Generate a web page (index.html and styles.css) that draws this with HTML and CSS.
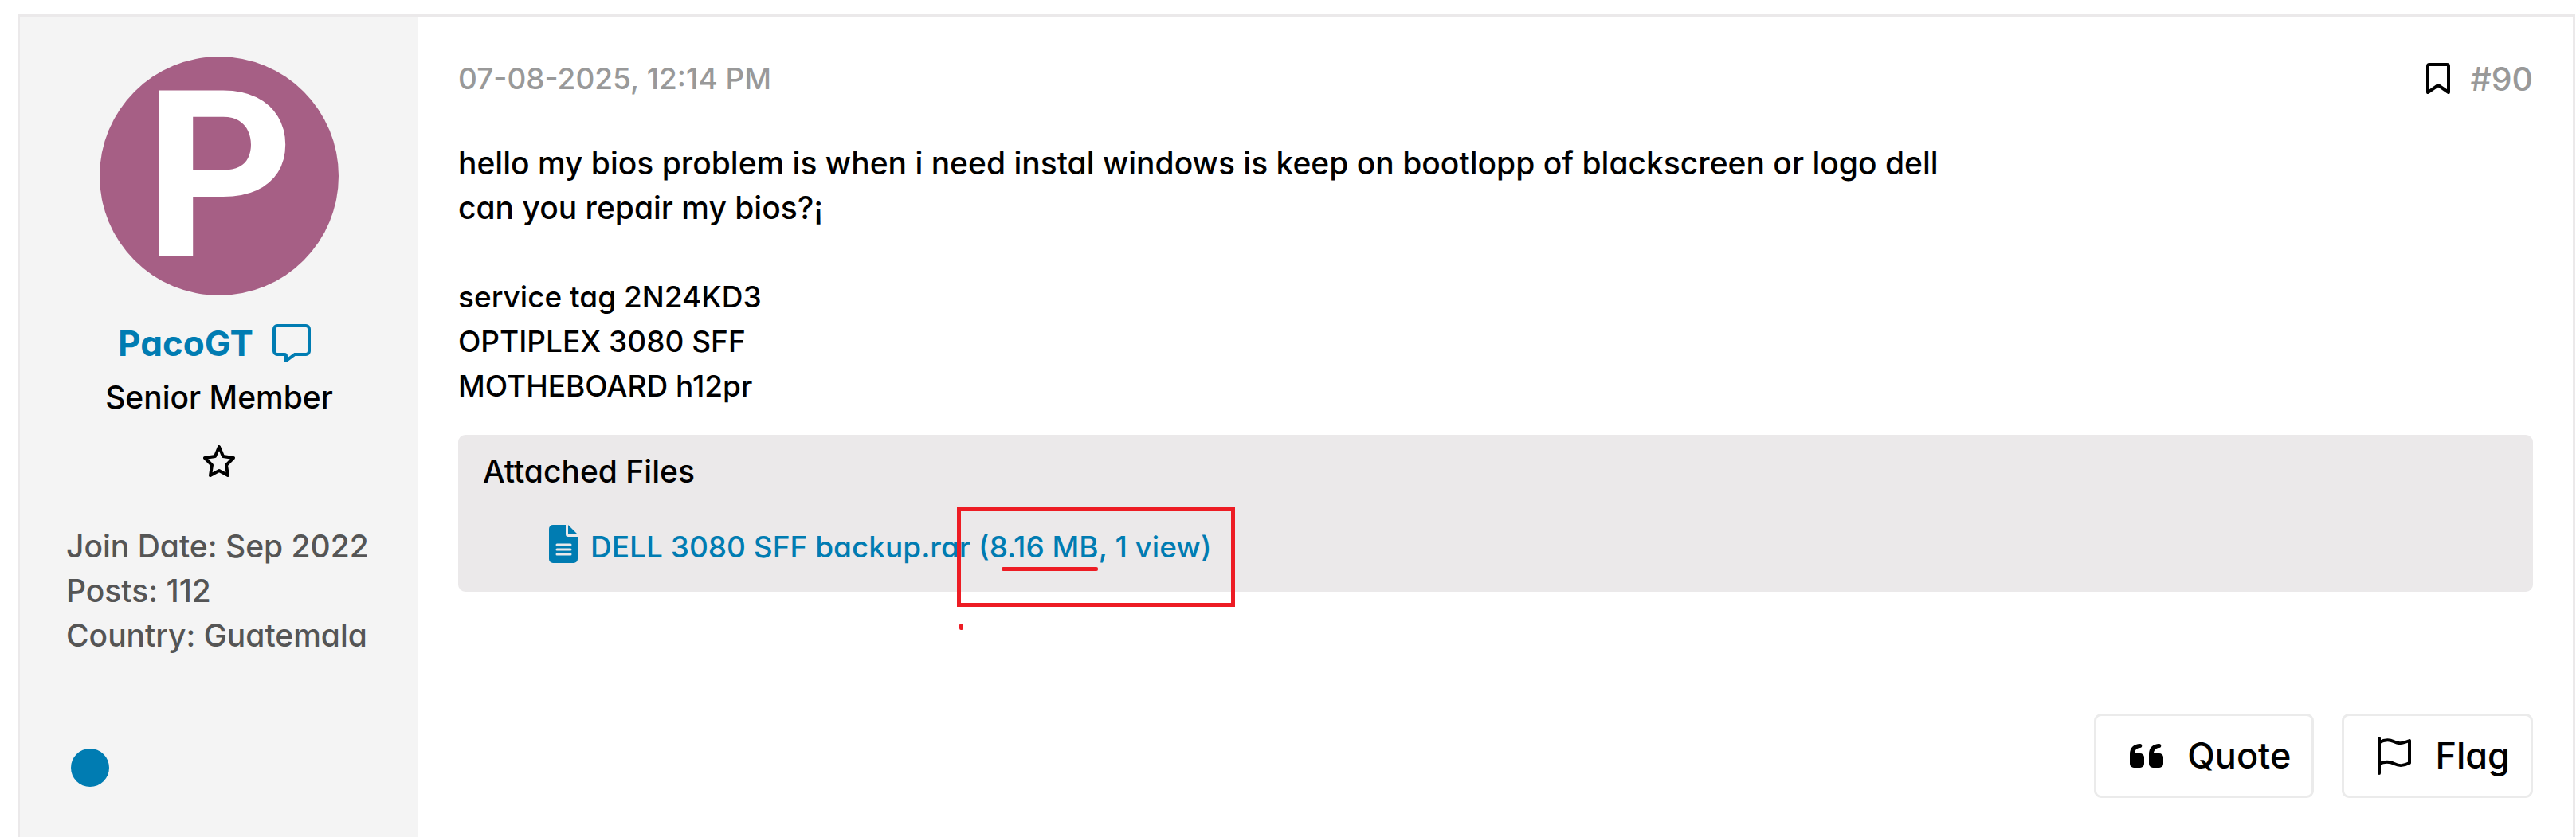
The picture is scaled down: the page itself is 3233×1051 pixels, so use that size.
FILE: index.html
```html
<!DOCTYPE html>
<html lang="en">
<head>
    <meta charset="utf-8">
    <title>Forum post #90</title>
    <link rel="stylesheet" href="styles.css">
</head>
<body>
    <article class="post">
        <aside class="user">
            <div class="avatar">P</div>
            <div class="user-name">
                <a href="#">PacoGT</a>
                <a href="#" aria-label="Send message">
                    <svg class="icon-chat" viewBox="0 0 48 48" fill="none" stroke="currentColor" stroke-width="4">
                        <path d="M6 2h36a4 4 0 0 1 4 4v28a4 4 0 0 1-4 4H28l-11 8v-6a2 2 0 0 0-2-2H6a4 4 0 0 1-4-4V6a4 4 0 0 1 4-4z"/>
                    </svg>
                </a>
            </div>
            <div class="user-title">Senior Member</div>
            <svg class="icon-star" viewBox="0 0 40 40" fill="none" stroke="currentColor" stroke-width="4" stroke-linejoin="round">
                <path d="M20 2l5 12 13 2-9 9 2 13-11-6-11 6 2-13-9-9 13-2z"/>
            </svg>
            <ul class="user-stats">
                <li>Join Date: Sep 2022</li>
                <li>Posts: 112</li>
                <li>Country: Guatemala</li>
            </ul>
            <span class="status"></span>
        </aside>

        <div class="content">
            <header class="post-header">
                <time>07-08-2025, 12:14 PM</time>
                <div class="post-links">
                    <a href="#" class="bookmark" aria-label="Bookmark">
                        <svg class="icon-bookmark" viewBox="0 0 30 40" fill="none" stroke="currentColor" stroke-width="4" stroke-linejoin="round">
                            <path d="M2 37V4a2 2 0 0 1 2-2h22a2 2 0 0 1 2 2v33l-13-9z"/>
                        </svg>
                    </a>
                    <a href="#" class="post-count">#90</a>
                </div>
            </header>

            <div class="post-text">
                <p>
                    hello my bios problem is when i need instal windows is keep on bootlopp of blackscreen or logo dell<br>
                    can you repair my bios?¡
                </p>
                <p class="specs">
                    service tag 2N24KD3<br>
                    OPTIPLEX 3080 SFF<br>
                    MOTHEBOARD h12pr
                </p>
            </div>

            <section class="attachments">
                <div class="attachments-title">Attached Files</div>
                <div class="file">
                    <svg class="icon-file" viewBox="0 0 36 48" fill="currentColor">
                        <path d="M5 0h16v12a3 3 0 0 0 3 3h12v28a5 5 0 0 1-5 5H5a5 5 0 0 1-5-5V5a5 5 0 0 1 5-5zM24 0l12 12H24z"/>
                        <path d="M10 25h17M10 31h17M10 37h17" stroke="#ebe9ea" stroke-width="3" stroke-linecap="round"/>
                    </svg>
                    <a href="#">DELL 3080 SFF backup.rar (8.16 MB, 1 view)</a>
                </div>
                <span class="mark mark-box"></span>
                <span class="mark mark-line"></span>
                <span class="mark mark-dot"></span>
            </section>

            <footer class="actions">
                <button type="button">
                    <svg class="icon-quote" viewBox="0 0 42 30" fill="currentColor">
                        <path id="q" d="M0 13C0 5 5 0 13 0c3 0 3 5 0 5-4 0-7 3-7 7h7a5 5 0 0 1 5 5v8a5 5 0 0 1-5 5H5a5 5 0 0 1-5-5z"/>
                        <use href="#q" x="24"/>
                    </svg>
                    Quote
                </button>
                <button type="button">
                    <svg class="icon-flag" viewBox="0 0 42 48" fill="none" stroke="currentColor" stroke-width="4" stroke-linecap="round" stroke-linejoin="round">
                        <path d="M2 2v44M2 7c6-3 12-4 18-1s10 3 20-1v28c-8 4-13 4-19 1s-12-3-19 0"/>
                    </svg>
                    Flag
                </button>
            </footer>
        </div>
    </article>
</body>
</html>
```

FILE: styles.css
```css
* {
    box-sizing: border-box;
}
body {
    margin: 0;
    padding: 18px 1px 0 22px;
    min-height: 100vh;
    display: flex;
    background: #fff;
    color: #000;
    font-family: Inter, "Open Sans", sans-serif;
    font-size: 39px;
    font-weight: 500;
    font-feature-settings: "cv11"; /* single-storey a */
    line-height: 56px;
}
a {
    color: #007cb2;
    text-decoration: none;
}
p {
    margin: 0;
}
svg {
    display: block;
    flex: none;
}
.post {
    flex: 1;
    display: flex;
    border: 3px solid #ebe9ea;
    border-bottom: none;
}

/* left column */
.user {
    flex: none;
    width: 500px;
    padding: 50px 0;
    display: flex;
    flex-direction: column;
    align-items: center;
    background: #f4f4f4;
}
.avatar {
    width: 300px;
    height: 300px;
    border-radius: 50%;
    background: #a65f85;
    color: #fff;
    font-family: Roboto, Arial, sans-serif;
    font-size: 292px;
    font-weight: bold;
    line-height: 300px;
    text-align: center;
}
.user-name {
    display: flex;
    align-items: center;
    gap: 24px;
    margin: 32px 0 12px;
    padding-right: 12px;
    font-size: 44px;
    font-weight: 700;
}
.icon-chat {
    width: 48px;
    height: 48px;
}
.icon-star {
    width: 40px;
    height: 40px;
    margin: 32px 0 59px;
}
.user-stats {
    align-self: stretch;
    margin: 0 0 114px;
    padding: 0 0 0 58px;
    list-style: none;
    color: #555;
}
.status {
    align-self: flex-start;
    width: 48px;
    height: 48px;
    margin-left: 64px;
    border-radius: 50%;
    background: #007cb2;
}

/* right column */
.content {
    flex: 1;
    padding: 50px;
}
.post-header {
    display: flex;
    justify-content: space-between;
    margin-bottom: 50px;
    color: #999;
    font-size: 37px;
}
.post-links {
    display: flex;
    align-items: center;
    gap: 26px;
}
.post-links a {
    color: #999;
}
.post-links .bookmark {
    color: #000;
}
.post-links .post-count {
    font-size: 41px;
}
.icon-bookmark {
    width: 30px;
    height: 40px;
}
.specs {
    margin-top: 56px;
    font-size: 37px;
}
.attachments {
    position: relative;
    margin-top: 33px;
    padding: 18px 31px 28px;
    border-radius: 9px;
    background: #ebe9ea;
}
.file {
    display: flex;
    gap: 16px;
    margin-top: 39px;
    padding-left: 83px;
    color: #007cb2;
    font-size: 37px;
}
.icon-file {
    width: 36px;
    height: 48px;
}

/* red marker over the file size */
.mark {
    position: absolute;
    background: #ed1c24;
}
.mark-box {
    left: 626px;
    top: 91px;
    width: 349px;
    height: 125px;
    border: 5px solid #ed1c24;
    background: none;
}
.mark-line {
    left: 682px;
    top: 166px;
    width: 121px;
    height: 5px;
    border-radius: 2px;
}
.mark-dot {
    left: 629px;
    top: 237px;
    width: 5px;
    height: 8px;
    border-radius: 2px;
}

.actions {
    display: flex;
    justify-content: flex-end;
    gap: 35px;
    margin-top: 153px;
}
button {
    display: flex;
    align-items: center;
    gap: 30px;
    height: 106px;
    padding: 0 26px 0 42px;
    border: 3px solid #ebebeb;
    border-radius: 9px;
    background: #fff;
    color: #000;
    font: inherit;
    font-size: 45px;
    cursor: pointer;
}
.icon-quote {
    width: 42px;
    height: 30px;
}
.icon-flag {
    width: 42px;
    height: 48px;
}
```
